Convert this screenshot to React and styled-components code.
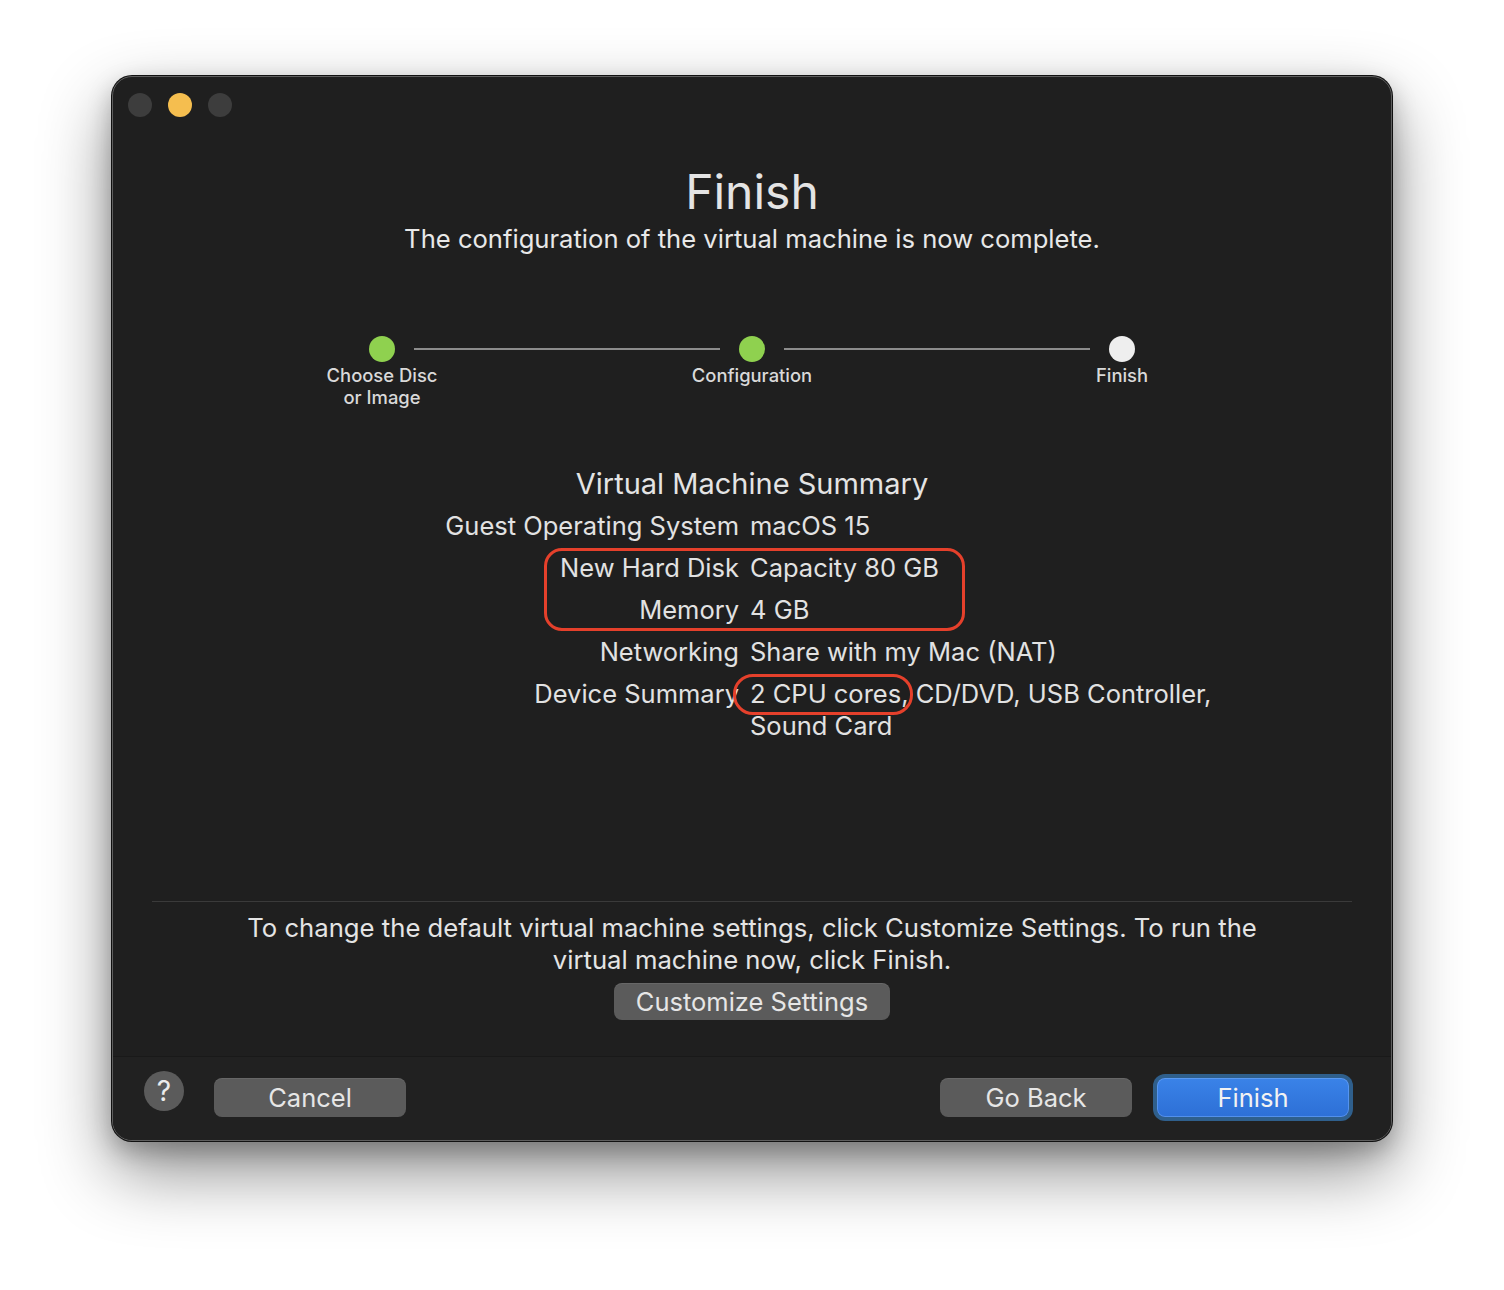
import React from 'react';
import styled, { createGlobalStyle } from 'styled-components';

const GlobalStyle = createGlobalStyle`
    html, body {
        margin: 0;
        padding: 0;
        background: #ffffff;
    }
    body {
        font-family: Inter, "Noto Sans", "Liberation Sans", sans-serif;
        -webkit-font-smoothing: antialiased;
    }
`

const Page = styled.div`
    width: 1504px;
    height: 1290px;
    display: flex;
    justify-content: center;
    padding-top: 76px;
    box-sizing: border-box;
`

const Window = styled.div`
    width: 1280px;
    height: 1065px;
    box-sizing: border-box;
    background: #1f1f1f;
    border-radius: 20px;
    border: 1px solid #5e5e5e;
    box-shadow: 0 0 0 1px #111, 0 30px 70px rgba(0, 0, 0, 0.45), 0 10px 25px rgba(0, 0, 0, 0.25);
    display: flex;
    flex-direction: column;
    overflow: hidden;
    color: #e2e2e2;
`

const TitleBar = styled.div`
    height: 55px;
    display: flex;
    align-items: center;
    gap: 16px;
    padding-left: 15px;
    flex-shrink: 0;
`

const Light = styled.span`
    width: 24px;
    height: 24px;
    border-radius: 50%;
    background: ${p => p.$color};
`

const Body = styled.div`
    flex: 1;
    display: flex;
    flex-direction: column;
    align-items: center;
`

const Title = styled.h1`
    margin: 30px 0 0;
    font-size: 48px;
    line-height: 60px;
    font-weight: 400;
    color: #e4e4e4;
`

const Subtitle = styled.p`
    margin: 0;
    font-size: 25.6px;
    line-height: 34px;
    color: #e8e8e8;
`

const Stepper = styled.div`
    margin-top: 80px;
    display: flex;
    align-items: flex-start;
`

const Step = styled.div`
    width: 130px;
    display: flex;
    flex-direction: column;
    align-items: center;
`

const Dot = styled.span`
    width: 26px;
    height: 26px;
    border-radius: 50%;
    background: ${p => (p.$done ? '#8fd14f' : '#eeeeee')};
`

const StepLabel = styled.span`
    margin-top: 2px;
    font-size: 18.4px;
    line-height: 22px;
    font-weight: 500;
    text-align: center;
    color: #d9d9d9;
`

const Connector = styled.span`
    width: 306px;
    height: 2px;
    margin: 12px -33px 0;
    background: #8c8c8c;
`

const SummaryTitle = styled.h2`
    margin: 56px 0 0;
    font-size: 29px;
    line-height: 40px;
    font-weight: 400;
    color: #e4e4e4;
`

const Summary = styled.div`
    position: relative;
    width: 100%;
    display: grid;
    grid-template-columns: 626px 470px;
    column-gap: 11px;
    row-gap: 10px;
    margin-top: 6px;
`

const Label = styled.div`
    text-align: right;
    font-size: 25.5px;
    line-height: 32px;
    white-space: nowrap;
`

const Value = styled.div`
    font-size: 25.5px;
    line-height: 32px;
`

const Annotation = styled.div`
    position: absolute;
    border: 3px solid #e5402b;
    border-radius: ${p => p.$radius}px;
    box-sizing: border-box;
    pointer-events: none;
`

const Divider = styled.div`
    margin-top: auto;
    width: 1200px;
    height: 1px;
    background: #3a3a3a;
`

const Note = styled.p`
    margin: 10px 0 0;
    font-size: 25.7px;
    line-height: 32px;
    text-align: center;
    color: #e4e4e4;
`

const Button = styled.button`
    font-family: inherit;
    font-size: 25.5px;
    color: #e6e6e6;
    background: #5b5b5b;
    border: none;
    border-radius: 8px;
    height: ${p => p.$height || 39}px;
    padding: 0;
    width: ${p => p.$width}px;
    box-shadow: inset 0 1px 0 rgba(255, 255, 255, 0.08);
    cursor: pointer;
`

const CustomizeButton = styled(Button)`
    margin: 7px 0 36px;
`

const Footer = styled.div`
    height: 84px;
    flex-shrink: 0;
    border-top: 1px solid #191919;
    background: #212121;
    display: flex;
    align-items: center;
    padding: 0 42px 2px 31px;
    box-sizing: border-box;
`

const HelpButton = styled.button`
    width: 40px;
    height: 40px;
    border-radius: 50%;
    border: none;
    background: #5b5b5b;
    color: #ececec;
    font-family: inherit;
    font-size: 28px;
    padding: 0;
    margin: -14px 30px 0 0;
`

const Spacer = styled.div`
    flex: 1;
`

const PrimaryButton = styled(Button)`
    margin-left: 25px;
    background: linear-gradient(#3a83e8, #2d6fd6);
    color: #f2f2f2;
    box-shadow: 0 0 0 4px #2f5f8c, inset 0 0 0 1px rgba(120, 175, 255, 0.5);
`

const rows = [
    ['Guest Operating System', 'macOS 15'],
    ['New Hard Disk', 'Capacity 80 GB'],
    ['Memory', '4 GB'],
    ['Networking', 'Share with my Mac (NAT)'],
    ['Device Summary', '2 CPU cores, CD/DVD, USB Controller, Sound Card'],
];

export default function App() {
    return (
        <Page>
            <GlobalStyle />
            <Window>
                <TitleBar>
                    <Light $color="#3d3d3d" />
                    <Light $color="#f5be4f" />
                    <Light $color="#3d3d3d" />
                </TitleBar>
                <Body>
                    <Title>Finish</Title>
                    <Subtitle>The configuration of the virtual machine is now complete.</Subtitle>

                    <Stepper>
                        <Step>
                            <Dot $done />
                            <StepLabel>Choose Disc<br />or Image</StepLabel>
                        </Step>
                        <Connector />
                        <Step>
                            <Dot $done />
                            <StepLabel>Configuration</StepLabel>
                        </Step>
                        <Connector />
                        <Step>
                            <Dot />
                            <StepLabel>Finish</StepLabel>
                        </Step>
                    </Stepper>

                    <SummaryTitle>Virtual Machine Summary</SummaryTitle>
                    <Summary>
                        {rows.map(([label, value]) => (
                            <React.Fragment key={label}>
                                <Label>{label}</Label>
                                <Value>{value}</Value>
                            </React.Fragment>
                        ))}
                        <Annotation $radius={18} style={{ left: 431, top: 38, width: 421, height: 83 }} />
                        <Annotation $radius={20} style={{ left: 620, top: 164, width: 180, height: 41 }} />
                    </Summary>

                    <Divider />
                    <Note>
                        To change the default virtual machine settings, click Customize Settings. To run the<br />
                        virtual machine now, click Finish.
                    </Note>
                    <CustomizeButton $width={276} $height={37}>Customize Settings</CustomizeButton>
                </Body>
                <Footer>
                    <HelpButton>?</HelpButton>
                    <Button $width={192}>Cancel</Button>
                    <Spacer />
                    <Button $width={192}>Go Back</Button>
                    <PrimaryButton $width={192}>Finish</PrimaryButton>
                </Footer>
            </Window>
        </Page>
    );
}
